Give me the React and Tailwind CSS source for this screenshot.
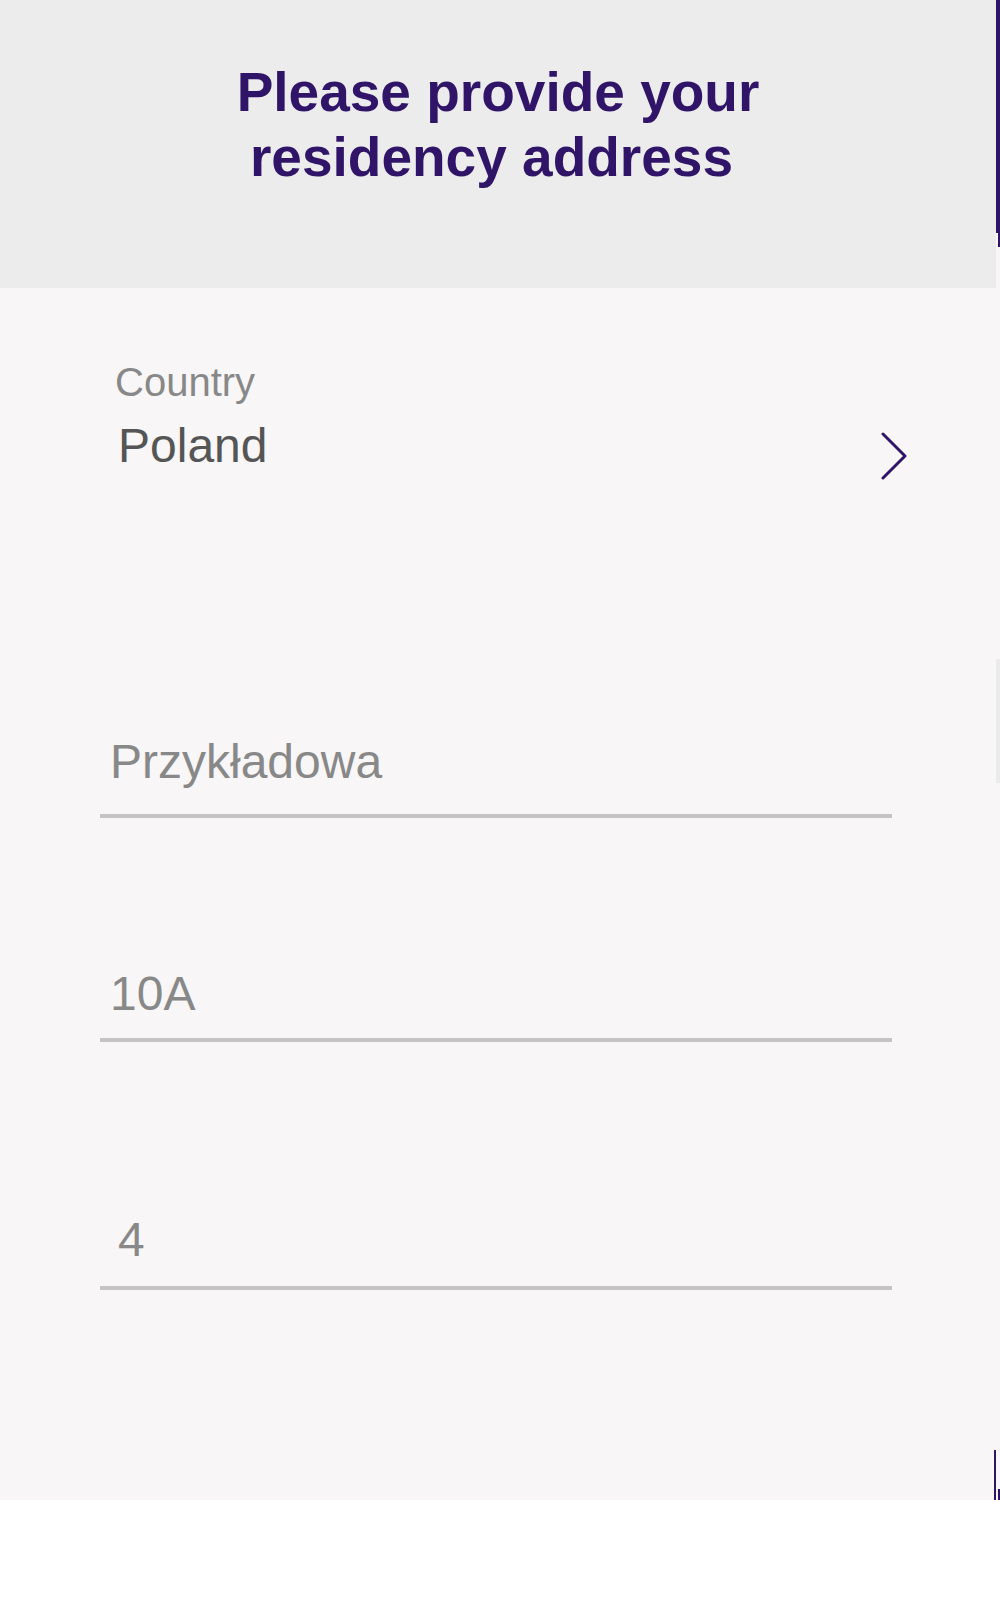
import React from 'react';

const purple = 'bg-[#2f1468]';

function Field({ value, className = '', textClass = 'pl-[10px]' }) {
  return (
    <div className={`ml-[100px] w-[792px] border-b-4 border-[#c4c4c4] ${className}`}>
      <div className={`text-[48px] leading-none text-[#888888] ${textClass}`}>{value}</div>
    </div>
  );
}

export default function App() {
  return (
    <div className="w-[1000px] min-h-[1600px] bg-white font-['Liberation_Sans',Arial,sans-serif]">
      {/* Header */}
      <div className="flex">
        <div className="w-[996px] h-[288px] bg-[#ececec] pt-[60px] text-center">
          <h1 className="text-[55px] leading-[65px] font-bold text-[#2f1468]">
            <div>Please provide your</div>
            <div className="pr-[13px]">residency address</div>
          </h1>
        </div>
        <div className="w-[4px] flex flex-col">
          <div className={`h-[233px] ${purple}`}></div>
          <div className="h-[14px] flex bg-[#f8f6f7]">
            <div className="w-[2px]"></div>
            <div className={`w-[2px] ${purple}`}></div>
          </div>
          <div className="flex-1 bg-[#f8f6f7]"></div>
        </div>
      </div>

      {/* Body */}
      <div className="flex h-[1212px] bg-[#f8f6f7]">
        <div className="w-[994px] flex flex-col">
          <div className="pt-[74px] pl-[115px] pr-[86px]">
            <div className="text-[40px] leading-none text-[#888888]">Country</div>
            <div className="mt-[20px] flex items-start justify-between">
              <div className="pl-[3px] text-[48px] leading-none text-[#555555]">Poland</div>
              <svg className="mt-[10px]" width="28" height="48" viewBox="0 0 28 48" fill="none">
                <path d="M3 2 L25 24 L3 46" stroke="#2f1468" strokeWidth="3" strokeLinecap="round" strokeLinejoin="round" />
              </svg>
            </div>
          </div>

          <Field value="Przykładowa" className="mt-[258px] pb-[28px]" />
          <Field value="10A" className="mt-[152px] pb-[20px]" />
          <Field value="4" className="mt-[174px] pb-[22px]" textClass="pl-[18px]" />
        </div>

        <div className="w-[6px] flex flex-col">
          <div className="h-[371px]"></div>
          <div className="h-[124px] flex">
            <div className="w-[2px]"></div>
            <div className="w-[4px] bg-[#ebebeb]"></div>
          </div>
          <div className="flex-1"></div>
          <div className="h-[50px] flex">
            <div className={`w-[2px] ${purple}`}></div>
            <div className="w-[2px]"></div>
            <div className="w-[2px] flex flex-col">
              <div className="flex-1"></div>
              <div className={`h-[11px] ${purple}`}></div>
            </div>
          </div>
        </div>
      </div>
    </div>
  );
}
